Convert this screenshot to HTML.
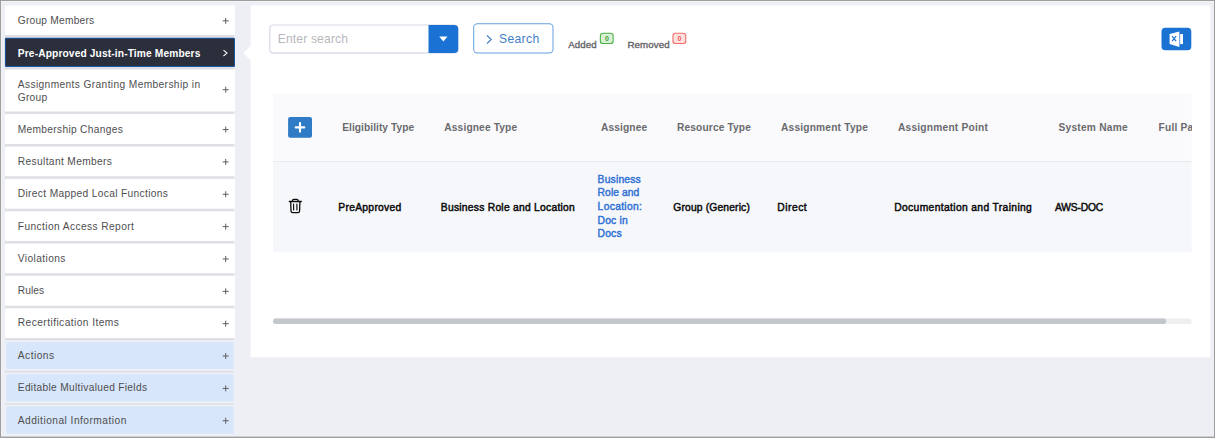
<!DOCTYPE html>
<html lang="en"><head><meta charset="utf-8"><title>Pre-Approved Just-in-Time Members</title>
<style>
html,body{margin:0;padding:0}
body{width:1215px;height:438px;overflow:hidden;position:relative;background:#edeff4;font-family:'Liberation Sans',sans-serif;}
.t{position:absolute;white-space:nowrap;line-height:16px;height:16px}
svg{position:absolute;left:0;top:0}
.clip{position:absolute;left:0;top:0;width:1191.6px;height:438px;overflow:hidden}
</style></head>
<body>
<svg width="1215" height="438" viewBox="0 0 1215 438" fill="none">
<!-- sidebar items + main panel -->
<rect x="5.20" y="8.00" width="228.50" height="425.00" rx="0" fill="#dddfe5"/>
<rect x="4.90" y="5.60" width="230.10" height="29.40" rx="1.5" fill="#fff"/>
<rect x="4.90" y="37.80" width="230.10" height="29.10" rx="1" fill="#1b62b9"/>
<rect x="5.70" y="38.60" width="228.50" height="27.50" rx="0" fill="#2b2f3b"/>
<rect x="4.90" y="69.50" width="230.10" height="42.00" rx="1.5" fill="#fff"/>
<rect x="4.90" y="114.10" width="230.10" height="29.85" rx="1.5" fill="#fff"/>
<rect x="4.90" y="146.45" width="230.10" height="29.85" rx="1.5" fill="#fff"/>
<rect x="4.90" y="178.80" width="230.10" height="29.85" rx="1.5" fill="#fff"/>
<rect x="4.90" y="211.15" width="230.10" height="29.85" rx="1.5" fill="#fff"/>
<rect x="4.90" y="243.50" width="230.10" height="29.85" rx="1.5" fill="#fff"/>
<rect x="4.90" y="275.85" width="230.10" height="29.85" rx="1.5" fill="#fff"/>
<rect x="4.90" y="308.20" width="230.10" height="29.85" rx="1.5" fill="#fff"/>
<rect x="4.90" y="340.15" width="230.10" height="30.65" rx="1.5" fill="#eef1f7"/>
<rect x="6.20" y="341.90" width="227.60" height="27.05" rx="0.6" fill="#d7e6fa"/>
<rect x="4.90" y="372.50" width="230.10" height="30.65" rx="1.5" fill="#eef1f7"/>
<rect x="6.20" y="374.25" width="227.60" height="27.05" rx="0.6" fill="#d7e6fa"/>
<rect x="4.90" y="404.85" width="230.10" height="30.65" rx="1.5" fill="#eef1f7"/>
<rect x="6.20" y="406.60" width="227.60" height="27.05" rx="0.6" fill="#d7e6fa"/>
<rect x="250.60" y="5.50" width="959.80" height="351.80" rx="1.2" fill="#fff"/>
<polygon points="251,45.6 243.300,53 251,60.400" fill="#fff"/>
<g stroke="#5e5e60" stroke-width="1"><path d="M222.700 20.85h6M225.700 17.85v6 M222.700 89.70h6M225.700 86.70v6 M222.700 129.58h6M225.700 126.58v6 M222.700 161.93h6M225.700 158.93v6 M222.700 194.28h6M225.700 191.28v6 M222.700 226.63h6M225.700 223.63v6 M222.700 258.98h6M225.700 255.98v6 M222.700 291.33h6M225.700 288.33v6 M222.700 323.68h6M225.700 320.68v6 M222.700 356.03h6M225.700 353.03v6 M222.700 388.38h6M225.700 385.38v6 M222.700 420.73h6M225.700 417.73v6"/></g>
<path d="M223.5 50.2l3.5 2.9-3.5 2.900" stroke="#fff" stroke-width="1.050"/>
<!-- toolbar, table -->
<rect x="269.00" y="24.80" width="189.80" height="29.20" rx="4.5" fill="#e9ecf3"/>
<rect x="269.40" y="24.40" width="189.00" height="28.90" rx="4" fill="#d9dce5"/>
<rect x="270.40" y="25.40" width="187.00" height="26.90" rx="3" fill="#fff"/>
<path d="M428.5 25h25.700a4 4 0 0 1 4 4v20a4 4 0 0 1 -4 4h-25.700z" fill="#1a73d4"/>
<rect x="473.20" y="23.30" width="80.30" height="30.20" rx="4.2" fill="#65a1dc"/>
<rect x="474.20" y="24.30" width="78.30" height="28.20" rx="3.2" fill="#fff"/>
<rect x="599.80" y="32.70" width="13.90" height="11.40" rx="3.2" fill="#4fb04a"/>
<rect x="600.90" y="33.80" width="11.70" height="9.20" rx="2.2" fill="#d8f0d3"/>
<rect x="672.40" y="32.70" width="13.90" height="11.40" rx="3.2" fill="#f56f6d"/>
<rect x="673.50" y="33.80" width="11.70" height="9.20" rx="2.2" fill="#fde1e0"/>
<rect x="1161.50" y="27.80" width="29.80" height="22.50" rx="3.8" fill="#1a72d3"/>
<rect x="273.00" y="93.70" width="918.60" height="67.60" rx="0" fill="#fafafc"/>
<rect x="273.00" y="161.30" width="918.60" height="1.00" rx="0" fill="#e1e2e7"/>
<rect x="273.00" y="162.30" width="918.60" height="90.00" rx="0" fill="#f6f7fa"/>
<rect x="288.10" y="116.90" width="23.90" height="20.90" rx="2" fill="#2f7bc5"/>
<rect x="273.00" y="318.60" width="918.60" height="5.30" rx="2.6" fill="#eeeff1"/>
<rect x="273.00" y="318.60" width="893.20" height="5.30" rx="2.6" fill="#c3c6ca"/>
<polygon points="439.2,36.5 447.5,36.5 443.35,41.5" fill="#fff"/>
<path d="M487 35.5l4.3 4-4.3 4" stroke="#3f7fc6" stroke-width="1.1"/>
<path d="M295.700 127.400h8.600M300 123.100v8.600" stroke="#fff" stroke-width="2.100" stroke-linecap="round"/>
<!-- excel icon -->
<path d="M1169.6 34l9.8-2.5v15.5l-9.8-2.9z" fill="#fff"/>
<rect x="1180.1" y="34" width="2.9" height="10.1" fill="#fff"/>
<path d="M1172.1 36.2l4 5M1176.1 36.2l-4 5" stroke="#1a72d3" stroke-width="1.15"/>
<!-- trash icon -->
<g stroke="#0c0c0c" stroke-width="1.3" stroke-linecap="round" stroke-linejoin="round">
<path d="M289.3 201.500h12"/>
<path d="M292.5 201.300v-.8q0-1.200 1.200-1.200h3.200q1.200 0 1.200 1.200v.8"/>
<path d="M290.700 201.800l.3 9.200q.1 1.600 1.600 1.600h5.400q1.500 0 1.600-1.600l.3-9.200"/>
<path d="M293.600 204v6M296.900 204v6" stroke-width="1.15"/>
</g>
</svg>
<div class="clip">
<span class="t" style="left:17.80px;top:13.02px;font-size:10.2px;color:#4e4e50;letter-spacing:0.230px;">Group Members</span>
<span class="t" style="left:17.80px;top:122.02px;font-size:10.2px;color:#4e4e50;letter-spacing:0.313px;">Membership Changes</span>
<span class="t" style="left:17.80px;top:154.02px;font-size:10.2px;color:#4e4e50;letter-spacing:0.363px;">Resultant Members</span>
<span class="t" style="left:17.80px;top:186.02px;font-size:10.2px;color:#4e4e50;letter-spacing:0.347px;">Direct Mapped Local Functions</span>
<span class="t" style="left:17.80px;top:219.02px;font-size:10.2px;color:#4e4e50;letter-spacing:0.405px;">Function Access Report</span>
<span class="t" style="left:17.80px;top:251.02px;font-size:10.2px;color:#4e4e50;letter-spacing:0.400px;">Violations</span>
<span class="t" style="left:17.80px;top:283.02px;font-size:10.2px;color:#4e4e50;letter-spacing:0.091px;">Rules</span>
<span class="t" style="left:17.80px;top:315.02px;font-size:10.2px;color:#4e4e50;letter-spacing:0.438px;">Recertification Items</span>
<span class="t" style="left:17.80px;top:348.02px;font-size:10.2px;color:#4e4e50;letter-spacing:0.483px;">Actions</span>
<span class="t" style="left:17.80px;top:380.02px;font-size:10.2px;color:#4e4e50;letter-spacing:0.308px;">Editable Multivalued Fields</span>
<span class="t" style="left:17.80px;top:413.02px;font-size:10.2px;color:#4e4e50;letter-spacing:0.475px;">Additional Information</span>
<span class="t" style="left:17.80px;top:46.02px;font-size:10.2px;color:#fff;letter-spacing:0.138px;font-weight:bold;">Pre-Approved Just-in-Time Members</span>
<span class="t" style="left:17.80px;top:77.02px;font-size:10.2px;color:#4e4e50;letter-spacing:0.377px;">Assignments Granting Membership in</span>
<span class="t" style="left:17.80px;top:90.02px;font-size:10.2px;color:#4e4e50;letter-spacing:0.234px;">Group</span>
<span class="t" style="left:277.70px;top:31.46px;font-size:12.1px;color:#b7b8bc;letter-spacing:0.160px;">Enter search</span>
<span class="t" style="left:499.00px;top:30.62px;font-size:12.2px;color:#3f7fc6;letter-spacing:0.312px;">Search</span>
<span class="t" style="left:568.20px;top:37.19px;font-size:9.7px;color:#636366;letter-spacing:0.097px;-webkit-text-stroke:0.35px #636366;">Added</span>
<span class="t" style="left:627.50px;top:37.19px;font-size:9.7px;color:#636366;letter-spacing:0.119px;-webkit-text-stroke:0.35px #636366;">Removed</span>
<span class="t" style="left:604.90px;top:31.12px;font-size:7px;color:#3f9f3a;letter-spacing:-0.006px;font-weight:bold;">0</span>
<span class="t" style="left:677.40px;top:31.12px;font-size:7px;color:#ef5a58;letter-spacing:-0.006px;font-weight:bold;">0</span>
<span class="t" style="left:342.20px;top:119.62px;font-size:10.2px;color:#6a6a6e;letter-spacing:0.054px;font-weight:bold;">Eligibility Type</span>
<span class="t" style="left:444.30px;top:119.62px;font-size:10.2px;color:#6a6a6e;letter-spacing:0.142px;font-weight:bold;">Assignee Type</span>
<span class="t" style="left:601.00px;top:119.62px;font-size:10.2px;color:#6a6a6e;letter-spacing:0.125px;font-weight:bold;">Assignee</span>
<span class="t" style="left:677.00px;top:119.62px;font-size:10.2px;color:#6a6a6e;letter-spacing:0.131px;font-weight:bold;">Resource Type</span>
<span class="t" style="left:781.00px;top:119.62px;font-size:10.2px;color:#6a6a6e;letter-spacing:0.190px;font-weight:bold;">Assignment Type</span>
<span class="t" style="left:898.00px;top:119.62px;font-size:10.2px;color:#6a6a6e;letter-spacing:0.212px;font-weight:bold;">Assignment Point</span>
<span class="t" style="left:1058.50px;top:119.62px;font-size:10.2px;color:#6a6a6e;letter-spacing:0.234px;font-weight:bold;">System Name</span>
<span class="t" style="left:1158.50px;top:119.62px;font-size:10.2px;color:#6a6a6e;letter-spacing:0.220px;font-weight:bold;">Full Path</span>
<span class="t" style="left:338.30px;top:199.98px;font-size:10.3px;color:#0a0a0a;letter-spacing:0.290px;-webkit-text-stroke:0.45px #0a0a0a;">PreApproved</span>
<span class="t" style="left:440.80px;top:199.98px;font-size:10.3px;color:#0a0a0a;letter-spacing:0.252px;-webkit-text-stroke:0.45px #0a0a0a;">Business Role and Location</span>
<span class="t" style="left:673.30px;top:199.98px;font-size:10.3px;color:#0a0a0a;letter-spacing:0.153px;-webkit-text-stroke:0.45px #0a0a0a;">Group (Generic)</span>
<span class="t" style="left:777.20px;top:199.98px;font-size:10.3px;color:#0a0a0a;letter-spacing:0.518px;-webkit-text-stroke:0.45px #0a0a0a;">Direct</span>
<span class="t" style="left:894.20px;top:199.98px;font-size:10.3px;color:#0a0a0a;letter-spacing:0.354px;-webkit-text-stroke:0.45px #0a0a0a;">Documentation and Training</span>
<span class="t" style="left:1055.00px;top:199.98px;font-size:10.3px;color:#0a0a0a;letter-spacing:-0.199px;-webkit-text-stroke:0.45px #0a0a0a;">AWS-DOC</span>
<span class="t" style="left:597.60px;top:171.98px;font-size:10.3px;color:#2e70d4;letter-spacing:0.190px;-webkit-text-stroke:0.42px #2e70d4;">Business</span>
<span class="t" style="left:597.60px;top:184.98px;font-size:10.3px;color:#2e70d4;letter-spacing:0.073px;-webkit-text-stroke:0.42px #2e70d4;">Role and</span>
<span class="t" style="left:597.60px;top:198.98px;font-size:10.3px;color:#2e70d4;letter-spacing:0.311px;-webkit-text-stroke:0.42px #2e70d4;">Location:</span>
<span class="t" style="left:597.60px;top:212.98px;font-size:10.3px;color:#2e70d4;letter-spacing:0.169px;-webkit-text-stroke:0.42px #2e70d4;">Doc in</span>
<span class="t" style="left:597.60px;top:225.98px;font-size:10.3px;color:#2e70d4;letter-spacing:0.158px;-webkit-text-stroke:0.42px #2e70d4;">Docs</span>
</div>
<svg width="1215" height="438" viewBox="0 0 1215 438" fill="none">
<rect x="1" y="1" width="1213" height="435.6" stroke="#f3f4f8" stroke-width="1" transform="translate(.5 .5)"/>
<rect x="0" y="0" width="1215" height="1" fill="#9e9e9e"/>
<rect x="0" y="0" width="1" height="438" fill="#9e9e9e"/>
<rect x="1214" y="0" width="1" height="438" fill="#9e9e9e"/>
<rect x="0" y="436.600" width="1215" height="1.400" fill="#9e9e9e"/>
</svg>
</body></html>
